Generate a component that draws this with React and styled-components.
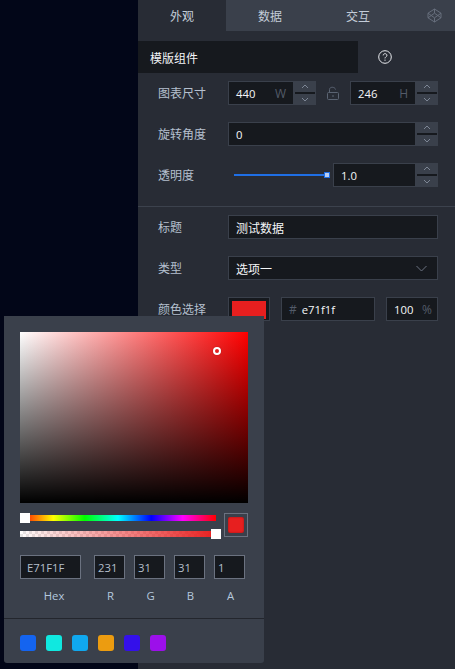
import React from "react";
import styled, { createGlobalStyle } from "styled-components";

const latin = `"Open Sans", "Noto Sans CJK SC", sans-serif`;
const cjk = `"Noto Sans CJK SC", sans-serif`;

const Global = createGlobalStyle`
  html, body { margin: 0; padding: 0; background: #020617; }
  body { font-family: ${cjk}; }
  * { box-sizing: border-box; }
`;

const Page = styled.div`
  position: relative;
  display: flex;
  width: 455px;
  height: 669px;
  overflow: hidden;
`;
const Canvas = styled.div`
  width: 138px;
  background: #020618;
`;
const Panel = styled.div`
  flex: 1;
  background: #282c35;
  color: #b5c0cf;
  font-size: 12px;
`;
const Tabs = styled.div`
  display: flex;
  height: 31px;
  background: #3a404b;
`;
const Tab = styled.div`
  width: 88px;
  padding-bottom: 1px;
  display: flex;
  align-items: center;
  justify-content: center;
  font-size: 12px;
  color: #c3ccd8;
  background: ${(p) => (p.$active ? "#282c35" : "transparent")};
`;
const TabIcon = styled.div`
  flex: 1;
  display: flex;
  align-items: center;
  justify-content: flex-end;
  padding-right: 13px;
  color: #666e7c;
`;
const SectionRow = styled.div`
  display: flex;
  align-items: center;
  margin-top: 10px;
  height: 32px;
`;
const SectionTitle = styled.div`
  width: 220px;
  height: 32px;
  display: flex;
  align-items: center;
  padding-left: 12px;
  background: #16191e;
  color: #f2f4f7;
  font-size: 12px;
`;
const Help = styled.div`
  width: 54px;
  display: flex;
  justify-content: center;
  color: #e8eaee;
`;
const Row = styled.div`
  display: flex;
  align-items: center;
  height: 24px;
  margin-top: ${(p) => p.$mt || 17}px;
  padding-right: 17px;
`;
const Label = styled.div`
  width: 90px;
  padding-left: 20px;
  padding-bottom: 2px;
  flex: none;
  font-size: 12px;
  color: #b5c0cf;
`;
const Field = styled.div`
  display: flex;
  align-items: center;
  justify-content: space-between;
  height: 24px;
  width: ${(p) => (p.$w ? `${p.$w}px` : "auto")};
  flex: ${(p) => (p.$w ? "none" : 1)};
  margin-left: ${(p) => p.$ml || 0}px;
  padding: 0 ${(p) => p.$pr || 7}px 0 7px;
  background: #16191e;
  border: 1px solid #3a404b;
  color: #f4f6f8;
  font-family: ${(p) => (p.$cjk ? cjk : latin)};
  font-size: ${(p) => (p.$cjk ? 12 : 11.3)}px;
`;
const Unit = styled.span`
  color: #535b69;
  font-family: ${latin};
  font-size: 12px;
`;
const HexText = styled.span`
  flex: 1;
  margin-left: 5px;
`;
const Spin = styled.div`
  width: 22px;
  height: 24px;
  flex: none;
  display: flex;
  flex-direction: column;
  justify-content: space-between;
  background: #3a404b;
  color: #7d8695;
`;
const SpinBtn = styled.div`
  height: 11px;
  display: flex;
  align-items: center;
  justify-content: center;
`;
const SpinLine = styled.div`
  height: 2px;
  background: #16191e;
  margin: 0 1px;
`;
const LockBox = styled.div`
  width: 34px;
  display: flex;
  justify-content: center;
  color: #5b6473;
`;
const Slider = styled.div`
  width: 105px;
  height: 24px;
  flex: none;
  padding-left: 6px;
  padding-right: 6px;
  display: flex;
  align-items: center;
`;
const SliderTrack = styled.div`
  flex: 1;
  height: 2px;
  background: #1f6fe5;
  position: relative;
`;
const SliderThumb = styled.div`
  position: absolute;
  right: -3px;
  top: -2px;
  width: 6px;
  height: 6px;
  background: #b9cdf0;
  border: 1px solid #1f6fe5;
`;
const Divider = styled.div`
  height: 1px;
  background: #3c424d;
  margin-top: 19px;
`;
const Swatch = styled.div`
  width: 42px;
  height: 24px;
  flex: none;
  padding: 3px 3px 0;
  background: #16191e;
  border: 1px solid #3a404b;
`;
const SwatchFill = styled.div`
  height: 18px;
  background: #e71f1f;
`;
const Popover = styled.div`
  position: absolute;
  left: 4px;
  top: 316px;
  width: 260px;
  height: 347px;
  background: #3a404b;
  border-radius: 0 0 3px 3px;
  color: #b5c9de;
  font-family: ${latin};
`;
const PickerBody = styled.div`
  padding: 16px 16px 0;
`;
const Saturation = styled.div`
  position: relative;
  height: 171px;
  background:
    linear-gradient(to top, #000, transparent),
    linear-gradient(to right, #fff, #f00);
`;
const Dot = styled.div`
  position: absolute;
  left: 193px;
  top: 15px;
  width: 8px;
  height: 8px;
  border-radius: 50%;
  border: 2px solid #fff;
  box-shadow: 0 0 1px #00000080;
`;
const SlidersRow = styled.div`
  display: flex;
  justify-content: space-between;
  margin-top: 10px;
`;
const Bars = styled.div`
  width: 196px;
`;
const Bar = styled.div`
  position: relative;
  height: 6px;
  margin-top: ${(p) => p.$mt || 0}px;
  background: ${(p) => p.$bg};
`;
const BarThumb = styled.div`
  position: absolute;
  top: -2px;
  ${(p) => (p.$end ? "right: -5px;" : "left: 0;")}
  width: 10px;
  height: 10px;
  background: #fff;
`;
const Preview = styled.div`
  width: 24px;
  height: 24px;
  padding: 3px;
  border: 1px solid #6b7280;
`;
const PreviewFill = styled.div`
  width: 100%;
  height: 100%;
  border-radius: 2px;
  background: #e71f1f;
  box-shadow: inset 0 0 2px #00000060;
`;
const Inputs = styled.div`
  display: flex;
  margin-top: 18px;
`;
const InputCol = styled.div`
  width: ${(p) => p.$w}px;
  margin-left: ${(p) => p.$ml || 0}px;
  display: flex;
  flex-direction: column;
  align-items: center;
`;
const HexBox = styled.div`
  width: 100%;
  height: 24px;
  display: flex;
  align-items: center;
  padding-left: ${(p) => p.$pl}px;
  background: #16191e;
  border: 1px solid #6b7280;
  color: #b5bfcb;
  font-size: 11.3px;
`;
const ColLabel = styled.div`
  margin-top: 9px;
  padding-left: ${(p) => p.$pl || 2}px;
  font-size: 11.3px;
  line-height: 16px;
`;
const PresetRow = styled.div`
  display: flex;
  gap: 10px;
  margin-top: 14px;
  padding: 16px 16px 0;
  border-top: 1px solid #23262d;
`;
const Preset = styled.div`
  width: 16px;
  height: 16px;
  border-radius: 3px;
  background: ${(p) => p.$c};
`;

const Up = () => (
  <svg width="8" height="5" viewBox="0 0 8 5" fill="none" stroke="currentColor">
    <path d="M1 4l3-3 3 3" />
  </svg>
);
const Down = () => (
  <svg width="8" height="5" viewBox="0 0 8 5" fill="none" stroke="currentColor">
    <path d="M1 1l3 3 3-3" />
  </svg>
);
const Spinner = () => (
  <Spin>
    <SpinBtn><Up /></SpinBtn>
    <SpinLine />
    <SpinBtn><Down /></SpinBtn>
  </Spin>
);

const hue = "linear-gradient(to right,#f00,#ff0 17%,#0f0 33%,#0ff 50%,#00f 67%,#f0f 83%,#f00)";
const alpha =
  "linear-gradient(to right,#e71f1f00,#e71f1f), repeating-conic-gradient(#e6e6e6 0 25%,#fff 0 50%) 0 0/6px 6px";
const presets = ["#1464f0", "#10e8e0", "#10a8ee", "#ec9c10", "#3410ea", "#9c10ea"];

export default function App() {
  return (
    <Page>
      <Global />
      <Canvas />
      <Panel>
        <Tabs>
          <Tab $active>外观</Tab>
          <Tab>数据</Tab>
          <Tab>交互</Tab>
          <TabIcon>
            <svg width="15" height="15" viewBox="0 0 15 15" fill="none" stroke="currentColor">
              <path d="M7.5 1l6.500 4.200v4.600L7.500 14 1 9.800V5.200zM7.500 1v4M7.500 10v4M1 5.200l6.500 4.600L14 5.200M1 9.800l6.500-4.600 6.500 4.600" />
            </svg>
          </TabIcon>
        </Tabs>
        <SectionRow>
          <SectionTitle>模版组件</SectionTitle>
          <Help>
            <svg width="14" height="14" viewBox="0 0 14 14" fill="none" stroke="currentColor">
              <circle cx="7" cy="7" r="6.300" />
              <path d="M5.200 5.400c0-2.300 3.700-2.300 3.700 0 0 1.400-1.900 1.400-1.900 3" />
              <path d="M7 9.600v1.200" />
            </svg>
          </Help>
        </SectionRow>
        <Row $mt={8}>
          <Label>图表尺寸</Label>
          <Field $w={66}>440<Unit>W</Unit></Field>
          <Spinner />
          <LockBox>
            <svg width="12" height="14" viewBox="0 0 12 14" fill="none" stroke="currentColor">
              <rect x="0.500" y="6.500" width="11" height="7" rx="1" />
              <path d="M2.500 6.500V3.500C2.500 .5 8 .5 8.500 3.500" />
              <path d="M6 9v2" />
            </svg>
          </LockBox>
          <Field $w={66}>246<Unit>H</Unit></Field>
          <Spinner />
        </Row>
        <Row>
          <Label>旋转角度</Label>
          <Field>0</Field>
          <Spinner />
        </Row>
        <Row>
          <Label>透明度</Label>
          <Slider>
            <SliderTrack><SliderThumb /></SliderTrack>
          </Slider>
          <Field>1.0</Field>
          <Spinner />
        </Row>
        <Divider />
        <Row $mt={8}>
          <Label>标题</Label>
          <Field $cjk>测试数据</Field>
        </Row>
        <Row>
          <Label>类型</Label>
          <Field $cjk $pr={10}>
            选项一
            <svg width="11" height="7" viewBox="0 0 11 7" fill="none" stroke="#6b7280">
              <path d="M.5 1l5 5 5-5" />
            </svg>
          </Field>
        </Row>
        <Row>
          <Label>颜色选择</Label>
          <Swatch><SwatchFill /></Swatch>
          <Field $w={94} $ml={11}><Unit>#</Unit><HexText>e71f1f</HexText></Field>
          <Field $w={52} $ml={11} $pr={5}>100<Unit>%</Unit></Field>
        </Row>
      </Panel>
      <Popover>
        <PickerBody>
          <Saturation><Dot /></Saturation>
          <SlidersRow>
            <Bars>
              <Bar $mt={2} $bg={hue}><BarThumb /></Bar>
              <Bar $mt={10} $bg={alpha}><BarThumb $end /></Bar>
            </Bars>
            <Preview><PreviewFill /></Preview>
          </SlidersRow>
          <Inputs>
            <InputCol $w={61}>
              <HexBox $pl={6}>E71F1F</HexBox>
              <ColLabel $pl={7}>Hex</ColLabel>
            </InputCol>
            <InputCol $w={31} $ml={13}>
              <HexBox $pl={3}>231</HexBox>
              <ColLabel>R</ColLabel>
            </InputCol>
            <InputCol $w={31} $ml={9}>
              <HexBox $pl={3}>31</HexBox>
              <ColLabel>G</ColLabel>
            </InputCol>
            <InputCol $w={31} $ml={9}>
              <HexBox $pl={3}>31</HexBox>
              <ColLabel>B</ColLabel>
            </InputCol>
            <InputCol $w={31} $ml={9}>
              <HexBox $pl={3}>1</HexBox>
              <ColLabel>A</ColLabel>
            </InputCol>
          </Inputs>
        </PickerBody>
        <PresetRow>
          {presets.map((c) => (
            <Preset key={c} $c={c} />
          ))}
        </PresetRow>
      </Popover>
    </Page>
  );
}
